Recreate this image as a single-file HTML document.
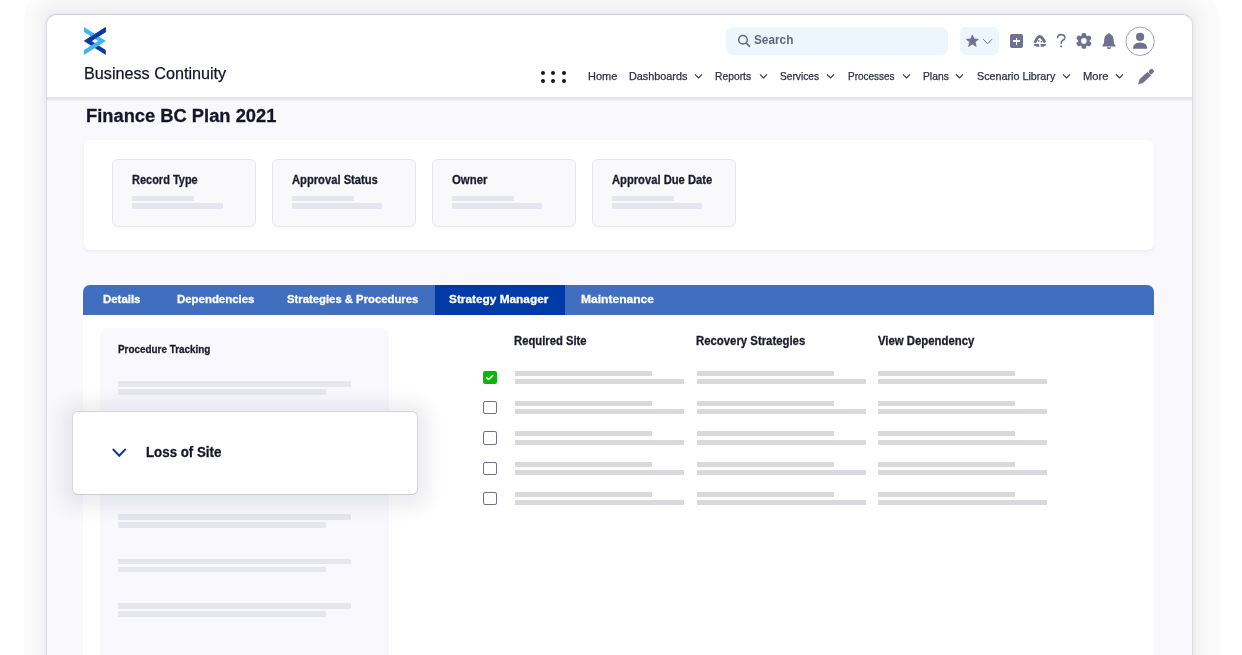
<!DOCTYPE html>
<html><head><meta charset="utf-8">
<style>
html,body{margin:0;padding:0;}
body{width:1242px;height:655px;overflow:hidden;background:#ffffff;position:relative;font-family:"Liberation Sans",sans-serif;}
.t{position:absolute;white-space:nowrap;line-height:1;transform-origin:0 0;}
.rg{-webkit-text-stroke:0.25px currentColor;}
.bd{-webkit-text-stroke:0.3px currentColor;}
.r{position:absolute;}
.card{background:#f9f9fc;border:1px solid #e6e6ee;border-radius:6px;}
</style></head><body>
<!-- outer shadow band -->
<div class="r" style="left:23.8px;top:-8px;width:1195.2px;height:700px;background:#fbfbfb;border-radius:26px;"></div>
<div class="r" style="left:32px;top:1px;width:1178px;height:700px;background:#f8f8f8;border-radius:20px;filter:blur(2px);"></div>
<div class="r" style="left:40px;top:3px;width:1159px;height:700px;background:#f3f3f5;border-radius:15px;filter:blur(2.5px);"></div>
<!-- window -->
<div class="r" style="left:46.3px;top:14px;width:1146.4px;height:700px;box-sizing:border-box;background:#f9f9fd;border:1px solid #dcdce0;border-top-color:#cfd0d2;border-radius:11px;box-shadow:0 0 4px 1px rgba(0,0,0,0.05);overflow:hidden;">
  <div class="r" style="left:0;top:0;width:1146px;height:83px;background:#fff;"></div>
</div>
<!-- header bottom line -->
<div class="r" style="left:47px;top:97.3px;width:1145px;height:4.5px;background:linear-gradient(#e0e0e6 0%,#e6e6ec 40%,#f9f9fd 100%);"></div>

<!-- logo -->
<svg class="r" style="left:84px;top:26.8px" width="21.8" height="28" viewBox="0 0 21.8 28">
  <polygon points="21.8,0 21.8,5.0 7.6,14 21.8,23.0 21.8,28 0.6,14.6 0,14 0.6,13.4" fill="#0b38a6"/>
  <polygon points="0,0 0,5.0 14.2,14 0,23.0 0,28 21.2,14.6 21.8,14 21.2,13.4" fill="#42b4f0"/>
  <polygon points="21.8,0 21.8,5.0 7.6,14 0,14 0.6,13.4" fill="#0b38a6"/>
</svg>

<svg class="r" style="left:693.8px;top:73px" width="10" height="7" viewBox="0 0 10 7"><path d="M1 1.3 L4.5 5 L8 1.3" fill="none" stroke="#35364d" stroke-width="1.2"/></svg>
<svg class="r" style="left:758.8px;top:73px" width="10" height="7" viewBox="0 0 10 7"><path d="M1 1.3 L4.5 5 L8 1.3" fill="none" stroke="#35364d" stroke-width="1.2"/></svg>
<svg class="r" style="left:826px;top:73px" width="10" height="7" viewBox="0 0 10 7"><path d="M1 1.3 L4.5 5 L8 1.3" fill="none" stroke="#35364d" stroke-width="1.2"/></svg>
<svg class="r" style="left:902px;top:73px" width="10" height="7" viewBox="0 0 10 7"><path d="M1 1.3 L4.5 5 L8 1.3" fill="none" stroke="#35364d" stroke-width="1.2"/></svg>
<svg class="r" style="left:955px;top:73px" width="10" height="7" viewBox="0 0 10 7"><path d="M1 1.3 L4.5 5 L8 1.3" fill="none" stroke="#35364d" stroke-width="1.2"/></svg>
<svg class="r" style="left:1061.7px;top:73px" width="10" height="7" viewBox="0 0 10 7"><path d="M1 1.3 L4.5 5 L8 1.3" fill="none" stroke="#35364d" stroke-width="1.2"/></svg>
<svg class="r" style="left:1115px;top:73px" width="10" height="7" viewBox="0 0 10 7"><path d="M1 1.3 L4.5 5 L8 1.3" fill="none" stroke="#35364d" stroke-width="1.2"/></svg>
<div class="r" style="left:541px;top:70.7px;width:4px;height:4px;background:#15151f;border-radius:2px;"></div>
<div class="r" style="left:541px;top:78.9px;width:4px;height:4px;background:#15151f;border-radius:2px;"></div>
<div class="r" style="left:551.3px;top:70.7px;width:4px;height:4px;background:#15151f;border-radius:2px;"></div>
<div class="r" style="left:551.3px;top:78.9px;width:4px;height:4px;background:#15151f;border-radius:2px;"></div>
<div class="r" style="left:561.5px;top:70.7px;width:4px;height:4px;background:#15151f;border-radius:2px;"></div>
<div class="r" style="left:561.5px;top:78.9px;width:4px;height:4px;background:#15151f;border-radius:2px;"></div>


<!-- search -->
<div class="r" style="left:726px;top:27px;width:222px;height:28px;background:#edf5fd;border-radius:7px;"></div>
<svg class="r" style="left:736px;top:33px" width="16" height="16" viewBox="0 0 16 16">
  <circle cx="7" cy="6.8" r="4.3" fill="none" stroke="#5e6684" stroke-width="1.5"/>
  <path d="M10.2 10 L13.4 13.4" stroke="#5e6684" stroke-width="1.6" stroke-linecap="round"/>
</svg>
<!-- star box -->
<div class="r" style="left:960px;top:27px;width:39px;height:28px;background:#edf5fd;border-radius:6px;"></div>
<svg class="r" style="left:965px;top:34px" width="15" height="14" viewBox="0 0 15 14">
  <path d="M7.4 1 L9.1 5.0 L13.4 5.3 L10.1 8.1 L11.2 12.4 L7.4 10.0 L3.6 12.4 L4.7 8.1 L1.4 5.3 L5.7 5.0 Z" fill="#6e7191" stroke="#6e7191" stroke-width="0.8" stroke-linejoin="round"/>
</svg>
<svg class="r" style="left:982px;top:38px" width="12" height="8" viewBox="0 0 12 8">
  <path d="M1.2 1.2 L5.6 5.7 L10 1.2" fill="none" stroke="#6e7191" stroke-width="1"/>
</svg>
<!-- plus box -->
<div class="r" style="left:1009.7px;top:34px;width:13.8px;height:13.9px;background:#6e7191;border-radius:2px;"></div>
<div class="r" style="left:1013.1px;top:40.2px;width:7px;height:1.6px;background:#fff;"></div>
<div class="r" style="left:1015.8px;top:37.5px;width:1.6px;height:7px;background:#fff;"></div>
<!-- dome icon -->
<svg class="r" style="left:1028px;top:30px" width="24" height="22" viewBox="0 0 24 22">
  <path d="M7.3 11.7 C8.4 9.2 9.6 6.7 11.7 6.5 C13.8 6.7 15.2 9.2 16.5 11.5" fill="none" stroke="#6e7191" stroke-width="2.8" stroke-linecap="round"/>
  <path d="M5.8 13.9 L11 13.9 L11.4 17.0 Q7.5 16.9 6.0 15.6 Z" fill="#6e7191"/>
  <path d="M12.4 13.9 L18.1 13.9 L17.9 15.6 Q16.4 16.9 12.9 17.0 Z" fill="#6e7191"/>
  <circle cx="10.7" cy="10.8" r="0.9" fill="#6e7191"/>
  <circle cx="13.4" cy="11.6" r="0.9" fill="#6e7191"/>
</svg>
<!-- question -->
<svg class="r" style="left:1055px;top:33px" width="13" height="16" viewBox="0 0 13 16">
  <path d="M2.6 4.6 Q2.6 1.6 6.2 1.6 Q9.8 1.6 9.8 4.5 Q9.8 6.3 7.6 7.5 Q6.2 8.3 6.2 10.3" fill="none" stroke="#6e7191" stroke-width="1.6" stroke-linecap="round"/>
  <circle cx="6.2" cy="13.3" r="1.1" fill="#6e7191"/>
</svg>
<!-- gear -->
<svg class="r" style="left:1075px;top:32px" width="18" height="18" viewBox="0 0 18 18">
  <g transform="translate(8.9,8.9)" fill="#6e7191">
    <circle r="5.8"/>
    <rect x="-2.3" y="-7.9" width="4.6" height="15.8" rx="1.6"/>
    <rect x="-2.3" y="-7.9" width="4.6" height="15.8" rx="1.6" transform="rotate(60)"/>
    <rect x="-2.3" y="-7.9" width="4.6" height="15.8" rx="1.6" transform="rotate(120)"/>
    <circle r="2.8" fill="#fff"/>
  </g>
</svg>
<!-- bell -->
<svg class="r" style="left:1101px;top:32px" width="16" height="18" viewBox="0 0 16 18">
  <path d="M7.9 1 Q8.9 1 8.9 2 Q12.3 3 12.6 7.5 L12.9 11.6 L14.6 13.6 Q14.8 14.5 14 14.5 L1.8 14.5 Q1 14.5 1.2 13.6 L2.9 11.6 L3.2 7.5 Q3.5 3 6.9 2 Q6.9 1 7.9 1 Z" fill="#6e7191"/>
  <path d="M5.8 15.3 L10 15.3 Q9.7 17.3 7.9 17.3 Q6.1 17.3 5.8 15.3 Z" fill="#6e7191"/>
</svg>
<!-- avatar -->
<svg class="r" style="left:1124px;top:25px" width="32" height="32" viewBox="0 0 32 32">
  <circle cx="16.1" cy="16.3" r="14.2" fill="#fff" stroke="#a3a1b9" stroke-width="1"/>
  <circle cx="16.1" cy="11.9" r="4.1" fill="#6e7191"/>
  <path d="M9 23.8 Q9 17.6 16.1 17.6 Q23.2 17.6 23.2 23.8 Z" fill="#6e7191"/>
</svg>
<!-- pencil -->
<svg class="r" style="left:1136px;top:67px" width="20" height="20" viewBox="0 0 20 20">
  <path d="M2.3 17.2 L3.9 12.1 L11.7 5.1 L14.9 8.3 L7.3 15.6 Z" fill="#6e7191" stroke="#6e7191" stroke-width="0.4" stroke-linejoin="round"/>
  <rect x="-2.4" y="-2.2" width="4.8" height="4.4" rx="1.5" fill="#6e7191" transform="translate(15.35,4.45) rotate(-45)"/>
</svg>

<!-- title -->

<!-- summary panel -->
<div class="r" style="left:84px;top:140px;width:1070px;height:110px;background:#fff;border-radius:6px;box-shadow:0 1.5px 3px rgba(30,30,60,0.06);"></div>
<div class="r card" style="left:112px;top:159.3px;width:141.5px;height:65.5px;"></div>
<div class="r" style="left:132.2px;top:195.8px;width:62.3px;height:4.8px;background:#e4e5ee;border-radius:1px;"></div>
<div class="r" style="left:132.2px;top:203.4px;width:90.5px;height:5.2px;background:#e4e5ee;border-radius:1px;"></div>
<div class="r card" style="left:272px;top:159.3px;width:141.5px;height:65.5px;"></div>
<div class="r" style="left:291.6px;top:195.8px;width:62.3px;height:4.8px;background:#e4e5ee;border-radius:1px;"></div>
<div class="r" style="left:291.6px;top:203.4px;width:90.5px;height:5.2px;background:#e4e5ee;border-radius:1px;"></div>
<div class="r card" style="left:432px;top:159.3px;width:141.5px;height:65.5px;"></div>
<div class="r" style="left:451.8px;top:195.8px;width:62.3px;height:4.8px;background:#e4e5ee;border-radius:1px;"></div>
<div class="r" style="left:451.8px;top:203.4px;width:90.5px;height:5.2px;background:#e4e5ee;border-radius:1px;"></div>
<div class="r card" style="left:592px;top:159.3px;width:141.5px;height:65.5px;"></div>
<div class="r" style="left:611.8000000000001px;top:195.8px;width:62.3px;height:4.8px;background:#e4e5ee;border-radius:1px;"></div>
<div class="r" style="left:611.8000000000001px;top:203.4px;width:90.5px;height:5.2px;background:#e4e5ee;border-radius:1px;"></div>


<!-- tab bar -->
<div class="r" style="left:83px;top:285px;width:1071px;height:30px;background:#426ebf;border-radius:7px 7px 0 0;"></div>
<div class="r" style="left:435px;top:285px;width:130px;height:30px;background:#003aa6;"></div>

<!-- content -->
<div class="r" style="left:83px;top:315px;width:1071px;height:400px;background:#fff;"></div>
<!-- procedure card -->
<div class="r" style="left:100px;top:328px;width:289px;height:400px;background:#f8f8fd;border-radius:7px;"></div>
<div class="r" style="left:118px;top:381.2px;width:233px;height:5.4px;background:#e5e6ee;border-radius:1px;"></div>
<div class="r" style="left:118px;top:389.2px;width:208px;height:5.4px;background:#e5e6ee;border-radius:1px;"></div>
<div class="r" style="left:118px;top:425.6px;width:233px;height:5.4px;background:#e5e6ee;border-radius:1px;"></div>
<div class="r" style="left:118px;top:433.6px;width:208px;height:5.4px;background:#e5e6ee;border-radius:1px;"></div>
<div class="r" style="left:118px;top:470.0px;width:233px;height:5.4px;background:#e5e6ee;border-radius:1px;"></div>
<div class="r" style="left:118px;top:478.0px;width:208px;height:5.4px;background:#e5e6ee;border-radius:1px;"></div>
<div class="r" style="left:118px;top:514.4px;width:233px;height:5.4px;background:#e5e6ee;border-radius:1px;"></div>
<div class="r" style="left:118px;top:522.4px;width:208px;height:5.4px;background:#e5e6ee;border-radius:1px;"></div>
<div class="r" style="left:118px;top:558.8px;width:233px;height:5.4px;background:#e5e6ee;border-radius:1px;"></div>
<div class="r" style="left:118px;top:566.8px;width:208px;height:5.4px;background:#e5e6ee;border-radius:1px;"></div>
<div class="r" style="left:118px;top:603.2px;width:233px;height:5.4px;background:#e5e6ee;border-radius:1px;"></div>
<div class="r" style="left:118px;top:611.2px;width:208px;height:5.4px;background:#e5e6ee;border-radius:1px;"></div>

<div class="r" style="left:483px;top:370.5px;width:13.5px;height:13.5px;background:#08b808;border-radius:2px"></div>
<svg class="r" style="left:483px;top:370.5px" width="14" height="14" viewBox="0 0 14 14"><path d="M3.5 6.7 L5.6 8.4 L9.7 4.6" fill="none" stroke="#fff" stroke-width="1.5" stroke-linecap="round" stroke-linejoin="round"/></svg>
<div class="r" style="left:515px;top:370.7px;width:137px;height:5px;background:#d9d9dd;border-radius:0.5px;"></div>
<div class="r" style="left:515px;top:378.8px;width:169px;height:5px;background:#d9d9dd;border-radius:0.5px;"></div>
<div class="r" style="left:697px;top:370.7px;width:137px;height:5px;background:#d9d9dd;border-radius:0.5px;"></div>
<div class="r" style="left:697px;top:378.8px;width:169px;height:5px;background:#d9d9dd;border-radius:0.5px;"></div>
<div class="r" style="left:878px;top:370.7px;width:137px;height:5px;background:#d9d9dd;border-radius:0.5px;"></div>
<div class="r" style="left:878px;top:378.8px;width:169px;height:5px;background:#d9d9dd;border-radius:0.5px;"></div>
<div class="r" style="left:483px;top:400.85px;width:13.5px;height:13.5px;box-sizing:border-box;border:1.6px solid #6f6f8f;border-radius:2px"></div>
<div class="r" style="left:515px;top:401.05px;width:137px;height:5px;background:#d9d9dd;border-radius:0.5px;"></div>
<div class="r" style="left:515px;top:409.15000000000003px;width:169px;height:5px;background:#d9d9dd;border-radius:0.5px;"></div>
<div class="r" style="left:697px;top:401.05px;width:137px;height:5px;background:#d9d9dd;border-radius:0.5px;"></div>
<div class="r" style="left:697px;top:409.15000000000003px;width:169px;height:5px;background:#d9d9dd;border-radius:0.5px;"></div>
<div class="r" style="left:878px;top:401.05px;width:137px;height:5px;background:#d9d9dd;border-radius:0.5px;"></div>
<div class="r" style="left:878px;top:409.15000000000003px;width:169px;height:5px;background:#d9d9dd;border-radius:0.5px;"></div>
<div class="r" style="left:483px;top:431.2px;width:13.5px;height:13.5px;box-sizing:border-box;border:1.6px solid #6f6f8f;border-radius:2px"></div>
<div class="r" style="left:515px;top:431.4px;width:137px;height:5px;background:#d9d9dd;border-radius:0.5px;"></div>
<div class="r" style="left:515px;top:439.5px;width:169px;height:5px;background:#d9d9dd;border-radius:0.5px;"></div>
<div class="r" style="left:697px;top:431.4px;width:137px;height:5px;background:#d9d9dd;border-radius:0.5px;"></div>
<div class="r" style="left:697px;top:439.5px;width:169px;height:5px;background:#d9d9dd;border-radius:0.5px;"></div>
<div class="r" style="left:878px;top:431.4px;width:137px;height:5px;background:#d9d9dd;border-radius:0.5px;"></div>
<div class="r" style="left:878px;top:439.5px;width:169px;height:5px;background:#d9d9dd;border-radius:0.5px;"></div>
<div class="r" style="left:483px;top:461.55px;width:13.5px;height:13.5px;box-sizing:border-box;border:1.6px solid #6f6f8f;border-radius:2px"></div>
<div class="r" style="left:515px;top:461.75px;width:137px;height:5px;background:#d9d9dd;border-radius:0.5px;"></div>
<div class="r" style="left:515px;top:469.85px;width:169px;height:5px;background:#d9d9dd;border-radius:0.5px;"></div>
<div class="r" style="left:697px;top:461.75px;width:137px;height:5px;background:#d9d9dd;border-radius:0.5px;"></div>
<div class="r" style="left:697px;top:469.85px;width:169px;height:5px;background:#d9d9dd;border-radius:0.5px;"></div>
<div class="r" style="left:878px;top:461.75px;width:137px;height:5px;background:#d9d9dd;border-radius:0.5px;"></div>
<div class="r" style="left:878px;top:469.85px;width:169px;height:5px;background:#d9d9dd;border-radius:0.5px;"></div>
<div class="r" style="left:483px;top:491.9px;width:13.5px;height:13.5px;box-sizing:border-box;border:1.6px solid #6f6f8f;border-radius:2px"></div>
<div class="r" style="left:515px;top:492.09999999999997px;width:137px;height:5px;background:#d9d9dd;border-radius:0.5px;"></div>
<div class="r" style="left:515px;top:500.2px;width:169px;height:5px;background:#d9d9dd;border-radius:0.5px;"></div>
<div class="r" style="left:697px;top:492.09999999999997px;width:137px;height:5px;background:#d9d9dd;border-radius:0.5px;"></div>
<div class="r" style="left:697px;top:500.2px;width:169px;height:5px;background:#d9d9dd;border-radius:0.5px;"></div>
<div class="r" style="left:878px;top:492.09999999999997px;width:137px;height:5px;background:#d9d9dd;border-radius:0.5px;"></div>
<div class="r" style="left:878px;top:500.2px;width:169px;height:5px;background:#d9d9dd;border-radius:0.5px;"></div>

<div class="t rg" style="left:83.90px;top:66.30px;font-size:15.797px;font-weight:400;color:#14152a;transform:scaleX(1.0261)">Business Continuity</div>
<div class="t" style="left:753.90px;top:33.75px;font-size:12.246px;font-weight:700;color:#5e6684;transform:scaleX(0.9644)">Search</div>
<div class="t rg" style="left:587.60px;top:71.00px;font-size:10.725px;font-weight:400;color:#2e2f46;transform:scaleX(1.0227)">Home</div>
<div class="t rg" style="left:629.30px;top:71.00px;font-size:10.725px;font-weight:400;color:#2e2f46;transform:scaleX(1.0107)">Dashboards</div>
<div class="t rg" style="left:715.30px;top:71.00px;font-size:10.725px;font-weight:400;color:#2e2f46;transform:scaleX(0.9617)">Reports</div>
<div class="t rg" style="left:780.00px;top:71.00px;font-size:10.725px;font-weight:400;color:#2e2f46;transform:scaleX(0.9500)">Services</div>
<div class="t rg" style="left:847.80px;top:71.00px;font-size:10.725px;font-weight:400;color:#2e2f46;transform:scaleX(0.9306)">Processes</div>
<div class="t rg" style="left:922.70px;top:71.00px;font-size:10.725px;font-weight:400;color:#2e2f46;transform:scaleX(0.9615)">Plans</div>
<div class="t rg" style="left:977.00px;top:71.00px;font-size:10.725px;font-weight:400;color:#2e2f46;transform:scaleX(1.0027)">Scenario Library</div>
<div class="t rg" style="left:1083.00px;top:71.00px;font-size:10.725px;font-weight:400;color:#2e2f46;transform:scaleX(1.0443)">More</div>
<div class="t bd" style="left:85.80px;top:106.70px;font-size:18.696px;font-weight:700;color:#16162a;transform:scaleX(0.9803)">Finance BC Plan 2021</div>
<div class="t bd" style="left:131.60px;top:173.60px;font-size:12.464px;font-weight:700;color:#1b1b2e;transform:scaleX(0.8822)">Record Type</div>
<div class="t bd" style="left:292.00px;top:173.60px;font-size:12.464px;font-weight:700;color:#1b1b2e;transform:scaleX(0.8990)">Approval Status</div>
<div class="t bd" style="left:452.20px;top:173.60px;font-size:12.464px;font-weight:700;color:#1b1b2e;transform:scaleX(0.9131)">Owner</div>
<div class="t bd" style="left:612.20px;top:173.60px;font-size:12.464px;font-weight:700;color:#1b1b2e;transform:scaleX(0.8991)">Approval Due Date</div>
<div class="t bd" style="left:102.70px;top:293.40px;font-size:11.739px;font-weight:700;color:#ffffff;transform:scaleX(0.9733)">Details</div>
<div class="t bd" style="left:177.00px;top:293.40px;font-size:11.739px;font-weight:700;color:#ffffff;transform:scaleX(0.9744)">Dependencies</div>
<div class="t bd" style="left:286.70px;top:293.40px;font-size:11.739px;font-weight:700;color:#ffffff;transform:scaleX(0.9647)">Strategies &amp; Procedures</div>
<div class="t bd" style="left:449.40px;top:293.40px;font-size:11.739px;font-weight:700;color:#ffffff;transform:scaleX(1.0103)">Strategy Manager</div>
<div class="t bd" style="left:580.80px;top:293.40px;font-size:11.739px;font-weight:700;color:#ffffff;transform:scaleX(1.0287)">Maintenance</div>
<div class="t bd" style="left:117.80px;top:344.30px;font-size:11.449px;font-weight:700;color:#1b1b2e;transform:scaleX(0.8648)">Procedure Tracking</div>
<div class="t bd" style="left:514.40px;top:335.20px;font-size:12.029px;font-weight:700;color:#1b1b2e;transform:scaleX(0.9369)">Required Site</div>
<div class="t bd" style="left:695.80px;top:335.20px;font-size:12.029px;font-weight:700;color:#1b1b2e;transform:scaleX(0.9456)">Recovery Strategies</div>
<div class="t bd" style="left:878.30px;top:335.20px;font-size:12.029px;font-weight:700;color:#1b1b2e;transform:scaleX(0.9451)">View Dependency</div>
<!-- loss of site popup -->
<div class="r" style="left:72px;top:411px;width:346px;height:83.5px;box-sizing:border-box;background:#fff;border:1px solid #d6d6da;border-bottom-color:#cbcbd0;border-radius:6px;box-shadow:0 2px 18px 11px rgba(20,20,40,0.075);"></div>
<svg class="r" style="left:110px;top:446px" width="18" height="14" viewBox="0 0 18 14">
  <path d="M3.4 3.6 L9.2 9.8 L15 3.6" fill="none" stroke="#0a36a2" stroke-width="2.1" stroke-linecap="round"/>
</svg>
<div class="t bd" style="left:146.00px;top:445.30px;font-size:14.928px;font-weight:700;color:#141428;transform:scaleX(0.8916)">Loss of Site</div>

</body></html>
